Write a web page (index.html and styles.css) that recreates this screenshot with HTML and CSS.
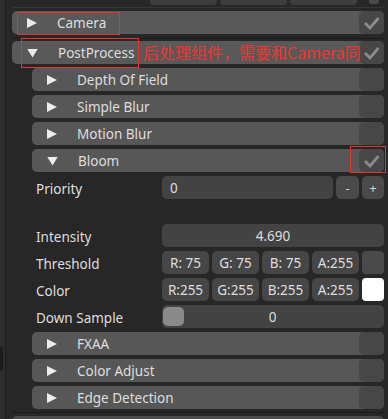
FILE: index.html
```html
<!DOCTYPE html>
<html>
<head>
<meta charset="utf-8">
<link rel="stylesheet" href="styles.css">
</head>
<body>
<div class="page">
  <div class="gutter"><div class="thumb"></div></div>
  <div class="main">
    <div class="prev">
      <span class="pbox"></span><span class="pbox"></span><span class="pbox"></span><span class="pnub"></span>
    </div>
    <div class="sep sep-top"></div>
    <div class="comp">
      <div class="hdr">
        <span class="tri tri-right"></span><span class="name">Camera</span>
        <span class="chk"><svg viewBox="0 0 25 23" width="25" height="23"><path d="M6 12 L11 17 L19.5 7" fill="none" stroke="#8c8c8c" stroke-width="2.8" stroke-linejoin="miter"/></svg></span>
        <span class="mark mark-camera"></span>
      </div>
    </div>
    <div class="sep sep-mid"></div>
    <div class="comp">
      <div class="hdr">
        <span class="tri tri-down"></span><span class="name">PostProcess</span>
        <span class="chk"><svg viewBox="0 0 25 23" width="25" height="23"><path d="M6 12 L11 17 L19.5 7" fill="none" stroke="#8c8c8c" stroke-width="2.8"/></svg></span>
        <span class="mark mark-pp"></span>
        <span class="note">后处理组件，需要和Camera同</span>
      </div>
      <div class="body">
        <div class="hdr sub"><span class="tri tri-right"></span><span class="name">Depth Of Field</span><span class="chk"></span></div>
        <div class="hdr sub"><span class="tri tri-right"></span><span class="name">Simple Blur</span><span class="chk"></span></div>
        <div class="hdr sub"><span class="tri tri-right"></span><span class="name">Motion Blur</span><span class="chk"></span></div>
        <div class="hdr sub"><span class="tri tri-down"></span><span class="name">Bloom</span>
          <span class="chk"><svg viewBox="0 0 25 23" width="25" height="23"><path d="M6 12 L11 17 L19.5 7" fill="none" stroke="#8a8a8a" stroke-width="2.8"/></svg></span>
          <span class="mark mark-bloom"></span>
        </div>
        <div class="prop">
          <span class="label">Priority</span>
          <div class="ctrl prio">
            <span class="field left">0</span><span class="btn">-</span><span class="btn">+</span>
          </div>
        </div>
        <div class="spacer"></div>
        <div class="prop">
          <span class="label">Intensity</span>
          <div class="ctrl"><span class="field">4.690</span></div>
        </div>
        <div class="prop">
          <span class="label">Threshold</span>
          <div class="ctrl rgba">
            <span class="cf">R: 75</span><span class="cf">G: 75</span><span class="cf">B: 75</span><span class="cf">A:255</span><span class="swatch dark"></span>
          </div>
        </div>
        <div class="prop">
          <span class="label">Color</span>
          <div class="ctrl rgba">
            <span class="cf">R:255</span><span class="cf">G:255</span><span class="cf">B:255</span><span class="cf">A:255</span><span class="swatch white"></span>
          </div>
        </div>
        <div class="prop">
          <span class="label">Down Sample</span>
          <div class="ctrl"><span class="field slider"><span class="knob"></span><span class="sval">0</span></span></div>
        </div>
        <div class="hdr sub"><span class="tri tri-right"></span><span class="name">FXAA</span><span class="chk"></span></div>
        <div class="hdr sub"><span class="tri tri-right"></span><span class="name">Color Adjust</span><span class="chk"></span></div>
        <div class="hdr sub"><span class="tri tri-right"></span><span class="name">Edge Detection</span><span class="chk"></span></div>
      </div>
    </div>
    <div class="sep sep-bot"></div>
    <div class="comp">
      <div class="hdr next"></div>
    </div>
  </div>
</div>
</body>
</html>
```

FILE: styles.css
```css
* { box-sizing: border-box; }
html, body { margin: 0; padding: 0; }
body {
  background: #272727;
  font-family: "Noto Sans", "Noto Sans CJK SC", sans-serif;
  font-size: 13.5px;
  color: #dedede;
  overflow: hidden;
  height: 419px;
}
.page { display: flex; height: 419px; }
.gutter {
  width: 6px;
  background: #2d2d2d;
  border-right: 1px solid #1e1e1e;
  flex: none;
  padding-top: 347px;
}
.thumb { width: 3px; height: 23px; background: #1b1b1b; }
.main { flex: 1; padding: 0 5px 0 6px; display: flex; flex-direction: column; }

.prev { height: 5px; display: flex; gap: 3px; padding-left: 138px; }
.pbox { width: 67px; height: 5px; background: #3e3e3e; border-radius: 0 0 4px 4px; }
.pnub { width: 10px; height: 4px; margin-left: 9px; background: #4a4a4a; border-radius: 0 0 3px 3px; }

.sep { height: 1px; flex: none; }
.sep-top { margin-top: 2px; margin-bottom: 3px; background: #363636; }
.sep-mid { margin-top: 4px; margin-bottom: 2px; background: #1c1c1c; }
.sep-bot { margin-top: 3px; margin-bottom: 3px; background: #1c1c1c; }

.comp { display: flex; flex-direction: column; }
.hdr {
  position: relative;
  height: 23px;
  flex: none;
  background: #595959;
  border-radius: 5px;
  display: flex;
  align-items: center;
  padding-left: 15px;
}
.hdr.next { height: 10px; background: #4c4c4c; border-radius: 5px 5px 0 0; }
.tri { width: 10px; height: 10px; flex: none; background: #ececec; margin-top: 1px; }
.tri-right { clip-path: polygon(0 0, 100% 50%, 0 100%); }
.tri-down { width: 11px; height: 9px; clip-path: polygon(0 0, 100% 0, 50% 100%); }
.name { margin-left: 20px; line-height: 23px; margin-top: 2px; white-space: nowrap; }
.chk {
  margin-left: auto;
  width: 25px;
  height: 23px;
  background: #474747;
  border-radius: 5px;
  display: flex;
}

.body { display: flex; flex-direction: column; gap: 4px; padding: 4px 0 0 20px; }
.sub { background: #575757; }

.prop { display: grid; grid-template-columns: 130px 1fr; height: 23px; align-items: center; }
.label { padding-left: 4px; padding-top: 2px; white-space: nowrap; }
.ctrl { display: flex; gap: 3px; height: 23px; }
.field {
  flex: 1;
  background: #434343;
  border-radius: 5px;
  display: flex;
  align-items: center;
  justify-content: center;
  line-height: 23px;
  padding-top: 1px;
}
.field.left { justify-content: flex-start; padding-left: 8px; }
.btn {
  width: 23px;
  background: #4a4a4a;
  border-radius: 5px;
  display: flex;
  align-items: center;
  justify-content: center;
  font-size: 13px;
  color: #d0d0d0;
  padding-top: 1px;
}
.btn:last-child { width: 22px; }
.rgba .cf {
  width: 47px;
  background: #464646;
  border-radius: 5px;
  display: flex;
  align-items: center;
  justify-content: center;
  white-space: nowrap;
  padding-top: 1px;
}
.swatch { width: 22px; border-radius: 4px; }
.swatch.dark { background: #4a4a4a; }
.swatch.white { background: #ffffff; }
.slider { position: relative; justify-content: flex-start; padding: 2px 1px 2px 1px; }
.knob { width: 21px; height: 19px; background: #8a8a8a; border-radius: 5px; flex: none; }
.sval { flex: 1; text-align: center; margin-right: 22px; padding-top: 1px; }

.spacer { height: 17px; }

.mark { position: absolute; border: 1px solid #e8332f; pointer-events: none; }
.mark-camera { left: 5px; top: 1px; width: 103px; height: 23px; }
.mark-pp { left: 9px; top: -3px; width: 118px; height: 30px; }
.mark-bloom { right: -2px; top: -3px; width: 36px; height: 27px; }
.note {
  position: absolute;
  left: 131px;
  top: 2px;
  font-family: "Noto Sans CJK SC", sans-serif;
  font-size: 16px;
  line-height: 19px;
  color: #f0352f;
  white-space: nowrap;
}
```
